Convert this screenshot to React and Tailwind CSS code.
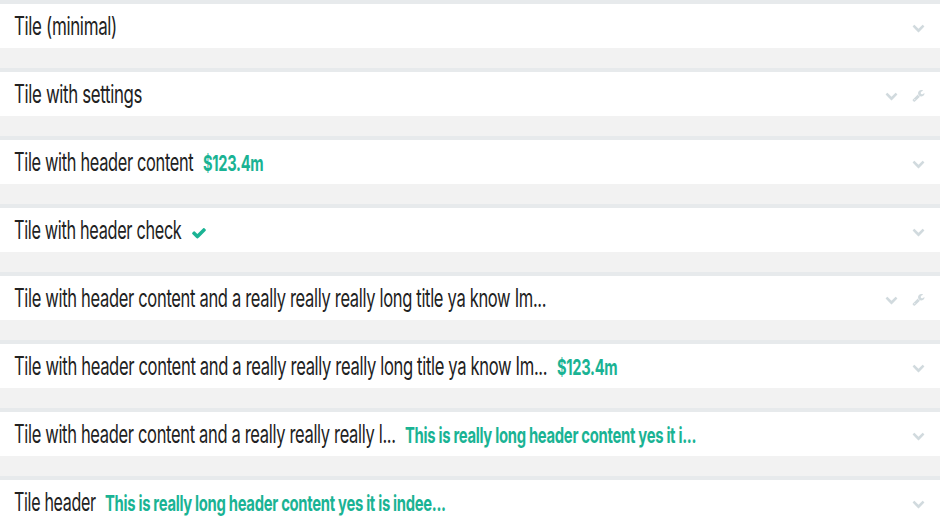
import React, { useLayoutEffect, useRef, useState } from "react";

const paths = {
  chevron:
    "M1683 808l-742 741q-19 19-45 19t-45-19l-742-741q-19-19-19-45.500t19-45.500l166-165q19-19 45-19t45 19l531 531 531-531q19-19 45-19t45 19l166 165q19 19 19 45.500t-19 45.500z",
  check:
    "M1671 566q0 40-28 68l-724 724-136 136q-28 28-68 28t-68-28l-136-136-362-362q-28-28-28-68t28-68l136-136q28-28 68-28t68 28l294 295 656-657q28-28 68-28t68 28l136 136q28 28 28 68z",
  wrench:
    "M448 1472q0-26-19-45t-45-19-45 19-19 45 19 45 45 19 45-19 19-45zm644-420l-682 682q-37 37-90 37-52 0-91-37l-106-108q-38-36-38-90 0-53 38-91l681-681q39 98 114.500 173.500t173.500 114.500zm634-435q0 39-23 106-47 134-164.500 217.500t-258.500 83.500q-185 0-316.500-131.500t-131.500-316.500 131.500-316.500 316.500-131.500q58 0 121.500 16.500t107.500 46.500q16 11 16 28t-16 28l-293 169v224l193 107q5-3 79-48.500t135.500-81 70.500-35.500q15 0 23.500 10t8.500 25z",
};

function Icon({ name, className }) {
  return (
    <svg viewBox="0 0 1792 1792" fill="currentColor" className={className}>
      <path d={paths[name]} />
    </svg>
  );
}

// Condenses a line of text horizontally so that it fills the given width.
function Condensed({ width, children }) {
  const ref = useRef(null);
  const [scale, setScale] = useState(0.6);
  useLayoutEffect(() => {
    setScale(width / ref.current.offsetWidth);
  }, [width]);
  return (
    <span className="block shrink-0" style={{ width }}>
      <span
        ref={ref}
        className="inline-block origin-left whitespace-pre"
        style={{ transform: `scaleX(${scale})` }}
      >
        {children}
      </span>
    </span>
  );
}

const longTitle = "Tile with header content and a really really really long title ya know Im...";

const tiles = [
  { title: "Tile (minimal)", width: 103 },
  { title: "Tile with settings", width: 128, settings: true },
  { title: "Tile with header content", width: 179.5, content: "$123.4m", contentWidth: 60.5 },
  { title: "Tile with header check", width: 167.5, check: true },
  { title: longTitle, width: 532.5, settings: true },
  { title: longTitle, width: 533.5, content: "$123.4m", contentWidth: 60.5 },
  {
    title: "Tile with header content and a really really really l...",
    width: 381.5,
    content: "This is really long header content yes it i...",
    contentWidth: 291,
  },
  {
    title: "Tile header",
    width: 81.5,
    content: "This is really long header content yes it is indee...",
    contentWidth: 340.5,
  },
];

function Tile({ tile }) {
  return (
    <section className="flex h-12 shrink-0 items-start justify-between border-t-4 border-[#e7eaec] bg-white pl-3.5 pr-[15px]">
      <div className="flex items-baseline gap-[9.5px] pt-1.5">
        <h2 className="text-[25px] font-[430] leading-8 tracking-[-0.02em] text-[#222]">
          <Condensed width={tile.width}>{tile.title}</Condensed>
        </h2>
        {tile.content && (
          <div className="text-[22px] font-bold leading-7 tracking-[-0.02em] text-[#1ab394]">
            <Condensed width={tile.contentWidth}>{tile.content}</Condensed>
          </div>
        )}
        {tile.check && (
          <Icon name="check" className="mt-[11px] size-4 self-start text-[#1ab394]" />
        )}
      </div>
      <div className="flex gap-[14.5px] pt-[17px] text-[#d1dade]">
        <Icon name="chevron" className="size-[13px]" />
        {tile.settings && <Icon name="wrench" className="size-[13px]" />}
      </div>
    </section>
  );
}

export default function App() {
  return (
    <main className="flex h-[524px] flex-col gap-5 overflow-hidden bg-[#f2f2f2] font-['Inter','Liberation_Sans',sans-serif]">
      {tiles.map((tile, i) => (
        <Tile key={i} tile={tile} />
      ))}
    </main>
  );
}
